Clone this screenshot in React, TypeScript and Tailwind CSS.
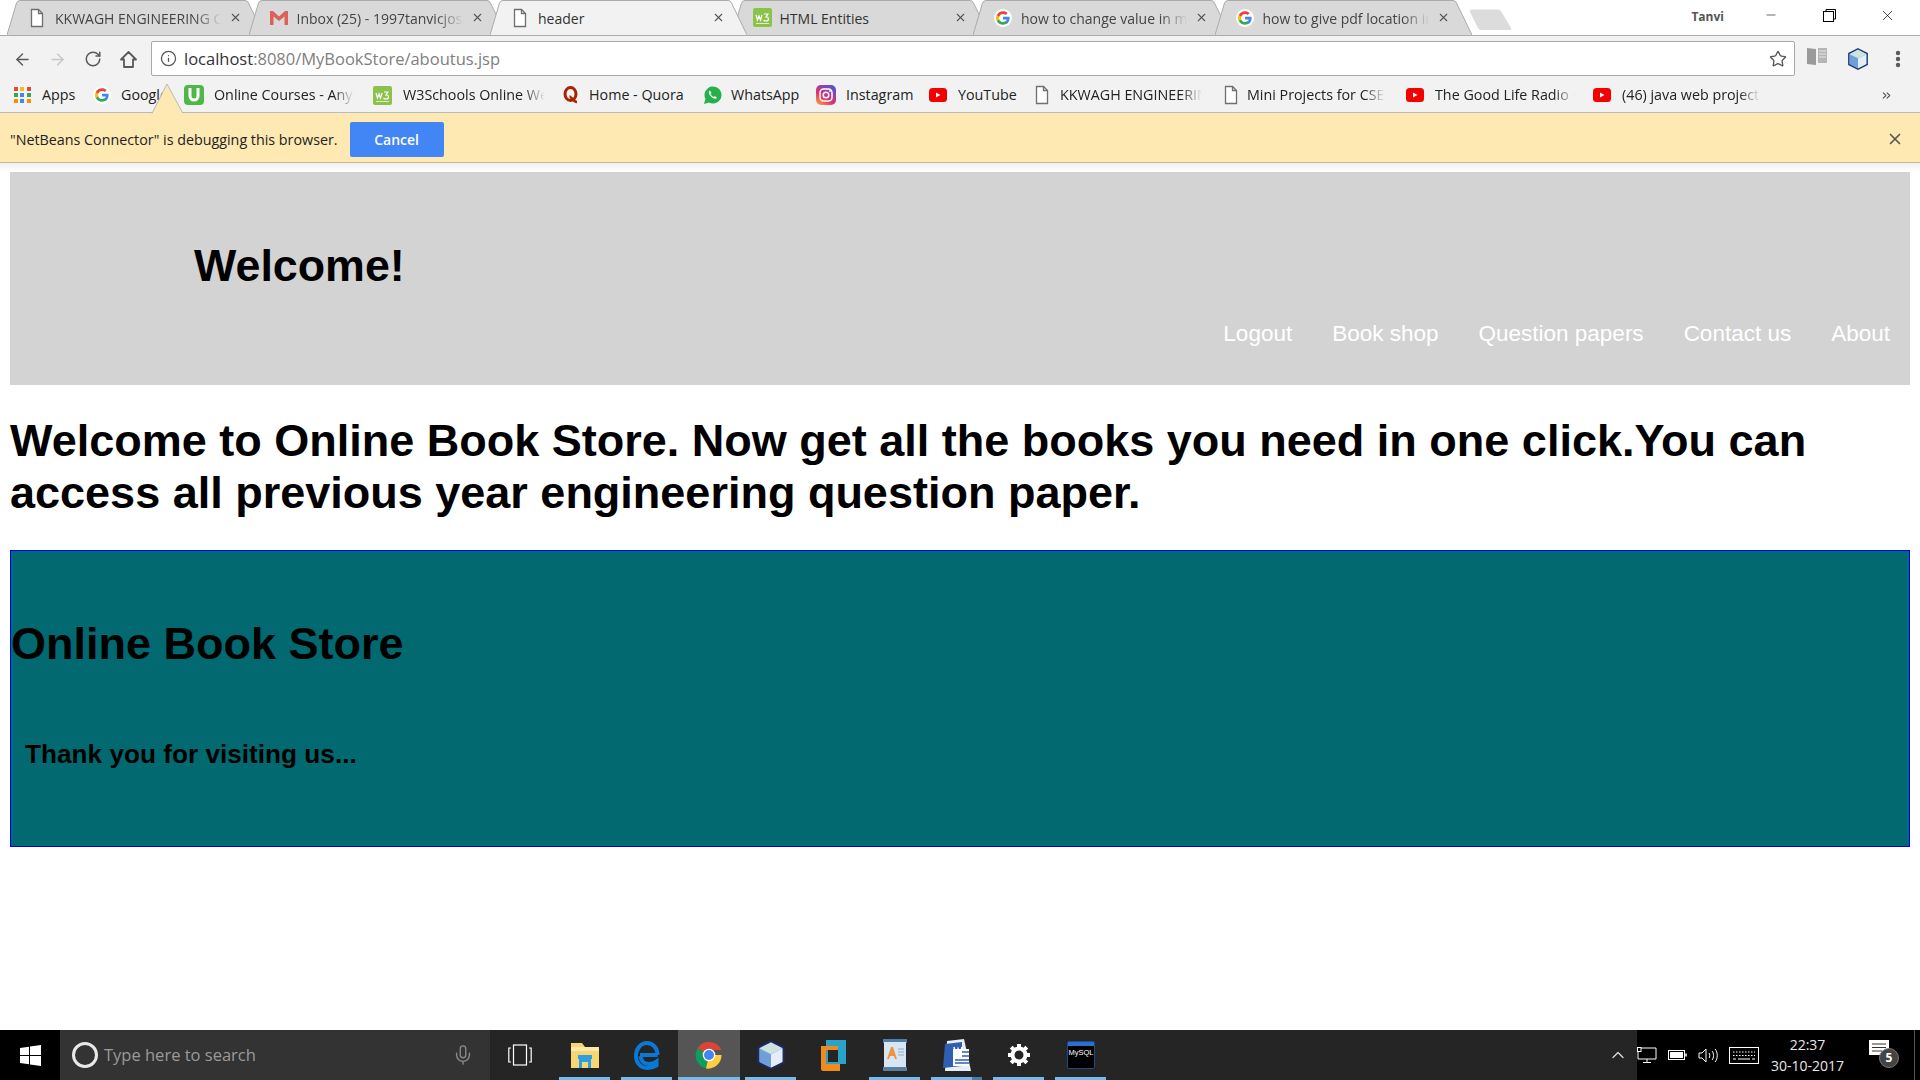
import React from "react";
import { ArrowLeft, ArrowRight, RotateCw, Info, Star, X, Minus, Mic, ChevronUp, ChevronsRight } from "lucide-react";

const ui = "font-['Open_Sans','Noto_Sans',sans-serif]";

function G({ s = 18 }: { s?: number }) {
  return (
    <svg width={s} height={s} viewBox="0 0 48 48" className="shrink-0">
      <circle cx="24" cy="24" r="24" fill="#fff" />
      <path fill="#4285F4" d="M41.6 24.4c0-1.3-.1-2.500-.3-3.700H24v7h9.900c-.4 2.300-1.700 4.200-3.700 5.500v4.600h6c3.500-3.200 5.400-7.900 5.400-13.400z" />
      <path fill="#34A853" d="M24 42c5 0 9.200-1.700 12.200-4.500l-6-4.600c-1.600 1.100-3.700 1.800-6.200 1.800-4.800 0-8.900-3.200-10.300-7.600H7.500v4.800C10.500 37.900 16.800 42 24 42z" />
      <path fill="#FBBC05" d="M13.700 28.100c-.4-1.100-.6-2.300-.6-3.600s.2-2.500.6-3.600v-4.800H7.500C6.200 18.600 5.500 21.200 5.500 24.500s.7 5.900 2 8.400z" />
      <path fill="#EA4335" d="M24 13.300c2.700 0 5.100.9 7 2.800l5.300-5.300C33.200 7.800 29 6 24 6 16.800 6 10.500 10.100 7.500 16.100l6.200 4.800c1.400-4.400 5.500-7.600 10.300-7.600z" />
    </svg>
  );
}

function Doc() {
  return (
    <svg width="18" height="20" viewBox="0 0 18 20" className="shrink-0" fill="none" stroke="#6f6f6f" strokeWidth="1.300">
      <path d="M3.500 1.500h7l4 4v13h-11z" fill="#fff" />
      <path d="M10.500 1.500v4h4" />
    </svg>
  );
}

function Gmail() {
  return (
    <svg width="18" height="16" viewBox="0 0 18 16" className="shrink-0">
      <path d="M0 1h3l6 5.500L15 1h3v14h-3.500V6.500L9 11 3.500 6.500V15H0z" fill="#d9635a" />
    </svg>
  );
}

function W3({ s = 19 }: { s?: number }) {
  return (
    <svg width={s} height={s} viewBox="0 0 19 19" className="shrink-0">
      <rect width="19" height="19" rx="2" fill="#8bc34a" />
      <path d="M3 7l1.500 5 1.500-4 1.500 4L9 7" stroke="#fff" strokeWidth="1.200" fill="none" />
      <path d="M11 6h4l-2 3c2 0 2.500 1 2.500 2s-1 2-2.500 2-2-.5-2.500-1" stroke="#fff" strokeWidth="1.200" fill="none" />
      <rect x="3" y="15" width="13" height="1" fill="#fff" opacity="0.7" />
    </svg>
  );
}

function Yt() {
  return (
    <svg width="18" height="14" viewBox="0 0 18 14" className="shrink-0">
      <rect width="18" height="14" rx="3.500" fill="#f40000" />
      <path d="M7 4.500l4.500 2.500L7 9.500z" fill="#fff" />
    </svg>
  );
}

function Grid() {
  const c = ["#e8453c", "#fbbc05", "#e8453c", "#34a853", "#4285f4", "#34a853", "#fb8c00", "#4285f4", "#fb8c00"];
  return (
    <div className="grid grid-cols-3 gap-[2px] w-[17px] shrink-0">
      {c.map((x, i) => (
        <svg key={i} width="4" height="4" className="block"><rect width="4" height="4" fill={x} /></svg>
      ))}
    </div>
  );
}

function U() {
  return (
    <svg width="20" height="20" viewBox="0 0 20 20" className="shrink-0">
      <rect width="20" height="20" rx="4" fill="#4db848" />
      <path d="M6 3v8a4 4 0 0 0 8 0V3" stroke="#fff" strokeWidth="3" fill="none" />
    </svg>
  );
}

function Quora() {
  return (
    <svg width="18" height="20" viewBox="0 0 18 20" className="shrink-0" fill="none" stroke="#a82400">
      <ellipse cx="8.500" cy="9" rx="5.500" ry="6.500" strokeWidth="3" />
      <path d="M7.500 11.500c2 0 3.500 5.500 7.500 5.500" strokeWidth="2.500" />
    </svg>
  );
}

function Wa() {
  return (
    <svg width="19" height="20" viewBox="0 0 19 20" className="shrink-0">
      <path d="M1 19l1.500-5A8.500 8.500 0 1 1 6 17.500z" fill="#25b04a" />
      <path d="M6.500 5.500c-1.500 1.500-.5 4 1.500 6s4.500 3 6 1.500l-2-2-1.500 1c-1-.5-2.500-2-3-3l1-1.500z" fill="#fff" />
    </svg>
  );
}

function Insta() {
  return (
    <svg width="20" height="20" viewBox="0 0 20 20" className="shrink-0">
      <defs>
        <linearGradient id="ig" x1="0" y1="1" x2="0.700" y2="0">
          <stop offset="0" stopColor="#fbb03b" />
          <stop offset="0.450" stopColor="#e1306c" />
          <stop offset="1" stopColor="#5b4fd0" />
        </linearGradient>
      </defs>
      <rect width="20" height="20" rx="5" fill="url(#ig)" />
      <rect x="4" y="4" width="12" height="12" rx="3.500" fill="none" stroke="#fff" strokeWidth="1.500" />
      <circle cx="10" cy="10" r="2.800" fill="none" stroke="#fff" strokeWidth="1.500" />
      <circle cx="14" cy="6" r="0.900" fill="#fff" />
    </svg>
  );
}

function Cube({ s = 22, dark = "#1f3a7a" }: { s?: number; dark?: string }) {
  return (
    <svg width={s} height={s} viewBox="0 0 24 24" className="shrink-0">
      <path d="M12 1l10 5v12l-10 5-10-5V6z" fill="#a9c6e8" stroke={dark} strokeWidth="1.600" />
      <path d="M12 2l9 4.500-9 4.500-9-4.500z" fill="#cfe3dd" />
      <path d="M3 7l9 4.500v10.500L3 17.500z" fill="#6f9fd8" />
      <path d="M21 7l-9 4.500v10.500l9-4.500z" fill="#e3eef8" />
    </svg>
  );
}

function Tab({ title, icon, active, fade = true }: { title: string; icon: React.ReactNode; active?: boolean; fade?: boolean }) {
  return (
    <div className={active ? "relative z-10 w-[257px] h-[35px] shrink-0 -mr-[15.500px]" : "relative w-[257px] h-[35px] shrink-0 -mr-[15.500px]"}>
      <svg width="257" height="35" viewBox="0 0 257 35" className="absolute inset-0">
        <path d="M0 35 L9.500 3 Q10.500 0.500 13 0.500 L238 0.500 Q240.500 0.500 241.500 3 L257 35" fill={active ? "#f2f2f2" : "#d9d9d9"} stroke="#ababab" strokeWidth="1" />
      </svg>
      <div className="relative flex items-center h-full pl-[21px]">
        <div className="w-[27px] flex items-center shrink-0">{icon}</div>
        <div className={fade ? "w-[170px] pt-[1px] whitespace-nowrap overflow-hidden text-[14px] text-[#444] [mask-image:linear-gradient(to_right,black_82%,transparent_98%)]" : "w-[170px] pt-[1px] whitespace-nowrap overflow-hidden text-[14px] text-[#333]"}>{title}</div>
        <X size={13} strokeWidth={2} className="ml-[4px] text-[#555]" />
      </div>
    </div>
  );
}

function Bm({ icon, label, w, col, tw, fade }: { icon: React.ReactNode; label: string; w: string; col: string; tw: string; fade?: boolean }) {
  return (
    <div className={`flex items-center shrink-0 ${w}`}>
      <div className={`${col} flex items-center shrink-0`}>{icon}</div>
      <div className={`${tw} whitespace-nowrap overflow-hidden text-[14.300px] text-[#222] ${fade ? "[mask-image:linear-gradient(to_right,black_85%,transparent)]" : ""}`}>{label}</div>
    </div>
  );
}

function Slot({ children, on, under = true, step }: { children: React.ReactNode; on?: boolean; under?: boolean; step?: boolean }) {
  return (
    <div className={on ? "relative w-[62px] h-full flex items-center justify-center bg-[#555]" : "relative w-[62px] h-full flex items-center justify-center"}>
      {children}
      {under && <div className={on ? "absolute bottom-0 left-0 right-0 h-[3px] bg-[#76b9ed]" : "absolute bottom-0 left-[5px] right-[6px] h-[3px] bg-[#76b9ed]"} />}
      {step && <div className="absolute bottom-0 right-[6px] w-[10px] h-[3px] bg-[#4a7ea8]" />}
    </div>
  );
}

export default function App() {
  return (
    <div className="w-[1920px] h-[1080px] flex flex-col overflow-hidden bg-white relative">
      <div className={ui}>
        {/* tab strip */}
        <div className="h-[36px] flex pl-[7px] border-b border-[#ababab] bg-white relative">
          <div className="flex h-[35px]">
            <Tab title="KKWAGH ENGINEERING COLLEGE" icon={<Doc />} />
            <Tab title="Inbox (25) - 1997tanvicjoshi" icon={<Gmail />} />
            <Tab title="header" icon={<Doc />} active fade={false} />
            <Tab title="HTML Entities" icon={<W3 />} fade={false} />
            <Tab title="how to change value in mysql" icon={<G />} />
            <Tab title="how to give pdf location in html" icon={<G />} />
          </div>
          <svg width="44" height="22" viewBox="0 0 44 22" className="ml-[13px] mt-[9px] shrink-0">
            <path d="M2 0.500 L29 0.500 Q31 0.500 32 2 L42 19 Q42.500 21 40 21 L12 21 Q10 21 9 19 L1 3 Q0.500 0.500 2 0.500z" fill="#dcdcdc" />
          </svg>
          <div className="ml-auto flex items-start h-full pr-[4px]">
            <div className="mt-[8px] mr-[18px] text-[12px] font-bold text-[#555]">Tanvi</div>
            <div className="w-[58px] h-[30px] flex items-center justify-center"><Minus size={14} strokeWidth={1} className="text-black" /></div>
            <div className="w-[58px] h-[30px] flex items-center justify-center">
              <svg width="13" height="13" viewBox="0 0 13 13" fill="none" stroke="#000"><rect x="0.500" y="2.500" width="10" height="10" /><path d="M3 2.500V0.500h9.500V10h-2" /></svg>
            </div>
            <div className="w-[58px] h-[30px] flex items-center justify-center"><X size={17} strokeWidth={1} className="text-black" /></div>
          </div>
        </div>

        {/* toolbar */}
        <div className="h-[45px] bg-[#f2f2f2] flex items-center">
          <div className="w-[151px] flex items-center shrink-0 pt-[1px]">
            <ArrowLeft size={19} strokeWidth={1.800} className="ml-[13px] text-[#5a5a5a]" />
            <ArrowRight size={19} strokeWidth={1.800} className="ml-[16px] text-[#c8c8c8]" />
            <RotateCw size={18} strokeWidth={2} className="ml-[17px] text-[#5a5a5a]" />
            <svg width="19" height="19" viewBox="0 0 19 19" fill="none" stroke="#5a5a5a" strokeWidth="1.800" className="ml-[17px] shrink-0">
              <path d="M2 9.500L9.500 2 17 9.500h-3V17H5V9.500z" strokeLinejoin="round" />
            </svg>
          </div>
          <div className="w-[1644px] h-[35px] shrink-0 bg-white border border-[#a9a9a9] rounded-[2px] flex items-center pl-[8px] pr-[7px]">
            <Info size={17} strokeWidth={1.800} className="text-[#555]" />
            <div className="ml-[7px] pt-[1px] text-[16.500px] text-[#333] whitespace-nowrap">localhost<span className="text-[#808080]">:8080/MyBookStore/aboutus.jsp</span></div>
            <Star size={18} strokeWidth={1.800} className="ml-auto text-[#555]" />
          </div>
          <div className="flex items-center flex-1 pl-[12px]">
            <svg width="20" height="19" viewBox="0 0 20 19" className="shrink-0 -mt-[4px]">
              <path d="M0 1l9 1v16l-9-1z" fill="#9a9a9a" /><path d="M11 1h9v15h-9z" fill="#b5b5b5" />
              <path d="M12 4h7M12 7h7M12 10h7" stroke="#e6e6e6" />
            </svg>
            <div className="ml-[20px]"><Cube s={22} /></div>
            <svg width="6" height="18" viewBox="0 0 6 18" className="ml-[26px] shrink-0" fill="#5a5a5a">
              <circle cx="3" cy="3" r="2.200" /><circle cx="3" cy="9" r="2.200" /><circle cx="3" cy="15" r="2.200" />
            </svg>
          </div>
        </div>

        {/* bookmarks */}
        <div className="h-[32px] bg-[#f2f2f2] flex items-center pl-[14px] pb-[3px] border-b border-[#b9b9b9]">
          <Bm icon={<Grid />} label="Apps" w="w-[79px]" col="w-[28px]" tw="w-[40px]" />
          <Bm icon={<G />} label="Google" w="w-[91px]" col="w-[28px]" tw="w-[46px]" />
          <Bm icon={<U />} label="Online Courses - Anytime" w="w-[189px]" col="w-[30px]" tw="w-[140px]" fade />
          <Bm icon={<W3 />} label="W3Schools Online Web Tutorials" w="w-[189px]" col="w-[30px]" tw="w-[142px]" fade />
          <Bm icon={<Quora />} label="Home - Quora" w="w-[141px]" col="w-[27px]" tw="w-[100px]" />
          <Bm icon={<Wa />} label="WhatsApp" w="w-[113px]" col="w-[28px]" tw="w-[80px]" />
          <Bm icon={<Insta />} label="Instagram" w="w-[113px]" col="w-[30px]" tw="w-[70px]" />
          <Bm icon={<Yt />} label="YouTube" w="w-[104px]" col="w-[29px]" tw="w-[60px]" />
          <Bm icon={<Doc />} label="KKWAGH ENGINEERING" w="w-[189px]" col="w-[27px]" tw="w-[142px]" fade />
          <Bm icon={<Doc />} label="Mini Projects for CSE Students" w="w-[184px]" col="w-[25px]" tw="w-[138px]" fade />
          <Bm icon={<Yt />} label="The Good Life Radio • Sensual" w="w-[187px]" col="w-[29px]" tw="w-[140px]" fade />
          <Bm icon={<Yt />} label="(46) java web project tutorial" w="w-[287px]" col="w-[29px]" tw="w-[138px]" fade />
          <ChevronsRight size={13} strokeWidth={2} className="text-[#555]" />
        </div>

        {/* infobar */}
        <div className="relative h-[50px] bg-[#fee9b2] border-b border-[#c9b98a] flex items-center pl-[10px] pt-[3px]">
          <svg width="34" height="31" viewBox="0 0 34 31" className="absolute left-[151px] -top-[30px]">
            <path d="M1 30.500L16 1l16 29.500" fill="#fee9b2" stroke="#b9b9b9" />
            <path d="M2 31h30" stroke="#fee9b2" strokeWidth="2" />
          </svg>
          <div className="pt-[1px] text-[14.300px] text-[#222]">"NetBeans Connector" is debugging this browser.</div>
          <button className="ml-[12px] w-[94px] h-[35px] bg-[#4285f4] rounded-[2px] text-white text-[14px] font-semibold">Cancel</button>
          <X size={18} strokeWidth={2.200} className="ml-auto mr-[16px] text-[#555]" />
        </div>
        <div className="h-[9px] bg-gradient-to-b from-[#f0f0f0] to-white" />
      </div>

      {/* page */}
      <div className="flex-1 px-[10px] font-['Liberation_Sans',Arial,sans-serif]">
        <div className="h-[213px] bg-[#d3d3d3] flex flex-col">
          <div className="pl-[184px] pt-[67px] text-[44.800px] leading-[52px] font-bold text-black">Welcome!</div>
          <div className="flex justify-end gap-[40px] pr-[20px] mt-[30px] text-[22.500px] leading-[26px] text-white">
            <span>Logout</span>
            <span>Book shop</span>
            <span>Question papers</span>
            <span>Contact us</span>
            <span>About</span>
          </div>
        </div>
        <h1 className="mt-[30px] text-[45px] leading-[52px] font-bold text-black">
          Welcome to Online Book Store. Now get all the books you need in one click.You can access all previous year engineering question paper.
        </h1>
        <div className="mt-[31px] h-[297px] bg-[#01696f] border border-[#0000ff] text-black font-bold">
          <div className="pt-[67px] text-[45px] leading-[52px]">Online Book Store</div>
          <div className="mt-[69px] pl-[14px] text-[26.200px] leading-[30px]">Thank you for visiting us...</div>
        </div>
      </div>

      {/* taskbar */}
      <div className={`${ui} h-[50px] shrink-0 flex bg-[#252525] text-white`}>
        <div className="w-[60px] bg-black flex items-center justify-center">
          <svg width="21" height="21" viewBox="0 0 21 21" fill="#fff"><path d="M0 3l9-1.300V10H0zM10 1.500L21 0v10H10zM0 11h9v8.300L0 18zM10 11h11v10l-11-1.500z" /></svg>
        </div>
        <div className="w-[430px] bg-[#333] flex items-center pl-[11px] pr-[16px]">
          <svg width="28" height="28" viewBox="0 0 28 28" fill="none"><circle cx="14" cy="14" r="11.500" stroke="#e8e8e8" strokeWidth="3" /></svg>
          <div className="ml-[5px] text-[16.500px] text-[#9a9a9a]">Type here to search</div>
          <Mic size={22} strokeWidth={1.500} className="ml-auto text-[#8a8a8a]" />
        </div>
        <div className="w-[64px] flex items-center pl-[18px]">
          <svg width="24" height="22" viewBox="0 0 24 22" fill="none" stroke="#fff" strokeWidth="1.200">
            <rect x="5.500" y="1" width="13" height="20" /><path d="M3 4H0.800v14H3M21 4h2.200v14H21" />
          </svg>
        </div>
        <Slot>
          <svg width="30" height="28" viewBox="0 0 30 28">
            <path d="M1 2h11l3 4h14v21H1z" fill="#f7d774" /><path d="M1 6h28v4H1z" fill="#fbe9a8" />
            <path d="M9 27V17h12v10h-3v-6h-6v6z" fill="#2f9fe0" /><path d="M8 14h14v4H8z" fill="#2f9fe0" />
          </svg>
        </Slot>
        <Slot>
          <svg width="28" height="30" viewBox="0 0 28 30" fill="none">
            <path d="M24.500 15H7M24.500 15C24.500 8 20 3 14 3 7.500 3 3 9 3 16c0 7.500 5.500 12 11.500 12 3.500 0 6.500-1 9-2.500v-4c-2.500 1.800-5 2.500-8 2.500-4 0-7.500-2.500-8-8" stroke="#0b78d7" strokeWidth="4" />
          </svg>
        </Slot>
        <Slot on>
          <svg width="28" height="28" viewBox="0 0 28 28">
            <path d="M14 14L2.500 7.500A13.500 13.500 0 0 1 26.500 9H14z" fill="#db4437" />
            <path d="M14 14l-11.500-6.500A13.500 13.500 0 0 0 11 27.500z" fill="#0f9d58" />
            <path d="M14 14h12.500A13.500 13.500 0 0 1 11 27.500z" fill="#ffcd40" />
            <circle cx="14" cy="14" r="6.300" fill="#fff" /><circle cx="14" cy="14" r="5" fill="#4285f4" />
          </svg>
        </Slot>
        <Slot><Cube s={30} dark="#1d2a6b" /></Slot>
        <Slot under={false}>
          <svg width="26" height="34" viewBox="0 0 26 34">
            <path d="M1 8h19v25H3a2 2 0 0 1-2-2z" fill="#f08a1d" />
            <path d="M6 2h20v24H6z" fill="#2aa3c8" /><path d="M8 12h10v12H8z" fill="#252525" />
            <path d="M6 8h12v4H6z" fill="#f08a1d" />
          </svg>
        </Slot>
        <Slot>
          <svg width="26" height="34" viewBox="0 0 26 34">
            <rect x="1" y="1" width="24" height="4" fill="#4e7ea8" /><rect x="2" y="4" width="22" height="26" fill="#d6e6f4" />
            <rect x="1" y="29" width="24" height="4" fill="#5a7f9c" />
            <path d="M5 21l4-12h2l4 12h-2l-1-3H8l-1 3z" fill="#f2923c" />
            <path d="M16 11h6M16 14h6M16 17h6" stroke="#8fb0cc" />
          </svg>
        </Slot>
        <Slot step>
          <svg width="30" height="34" viewBox="0 0 30 34">
            <path d="M5 3l17-2 7 32-26 0z" fill="#e6eef8" />
            <path d="M3 6l17-2v24L1 30z" fill="#2f5fb0" /><path d="M11 11h16v17H11z" fill="#fff" />
            <path d="M12 9l2 9 2-7 2 7 2-9" stroke="#fff" strokeWidth="1.500" fill="none" />
            <path d="M20 14h7M20 18h7M13 22h14M13 25h14" stroke="#2f5fb0" strokeWidth="1.500" />
          </svg>
        </Slot>
        <Slot>
          <svg width="24" height="24" viewBox="0 0 24 24" fill="none" stroke="#fff">
            <circle cx="12" cy="12" r="6.500" strokeWidth="4" />
            <path d="M12 1v5M12 18v5M1 12h5M18 12h5M4.200 4.200l3.500 3.500M16.300 16.300l3.500 3.500M19.800 4.200l-3.500 3.500M7.700 16.300l-3.500 3.500" strokeWidth="4" />
          </svg>
        </Slot>
        <Slot>
          <div className="w-[28px] h-[28px] bg-black border border-[#1e4a8a] rounded-[2px] flex flex-col">
            <div className="h-[4px] bg-[#2a6fd0]" />
            <div className="text-[7.500px] leading-[14px] text-white text-center whitespace-nowrap font-['Liberation_Sans',sans-serif]">MySQL</div>
          </div>
        </Slot>
        <div className="flex-1" />
        <div className="w-[283px] bg-black relative flex items-center">
          <ChevronUp size={20} strokeWidth={1.500} className="absolute -left-[29px] text-[#ddd]" />
          <svg width="20" height="16" viewBox="0 0 20 16" fill="none" stroke="#fff" className="ml-0 shrink-0"><path d="M4 1h15v11H1V4M10 12v3M6 15.500h8" /><rect x="0.500" y="0.500" width="3.500" height="4" /></svg>
          <svg width="19" height="10" viewBox="0 0 19 10" className="ml-[11px] shrink-0" fill="none" stroke="#fff"><rect x="0.500" y="0.500" width="16" height="9" /><rect x="2" y="2" width="13" height="6" fill="#fff" stroke="none" /><path d="M18 3.500v3" strokeWidth="1.500" /></svg>
          <svg width="21" height="17" viewBox="0 0 21 17" className="ml-[11px] shrink-0" fill="none" stroke="#fff"><path d="M1 6h3l4-4v13l-4-4H1z" /><path d="M11 6c1 1 1 4 0 5M14 4c2 2 2 7 0 9M17 2c3 3 3 10 0 13" /></svg>
          <svg width="30" height="17" viewBox="0 0 30 17" className="ml-[10px] shrink-0" fill="none" stroke="#fff"><rect x="0.500" y="0.500" width="29" height="16" /><path d="M4 5h22M4 8.500h22" strokeDasharray="1.500 1.500" /><path d="M4 12h3M9 12h12M23 12h3" /></svg>
          <div className="w-[81px] ml-[8px] text-center text-[14px] leading-[21px] text-[#e8e8e8] shrink-0">
            <div>22:37</div>
            <div>30-10-2017</div>
          </div>
          <div className="relative ml-[21px] w-[30px] h-[30px] shrink-0">
            <svg width="20" height="19" viewBox="0 0 20 19"><path d="M0 0h20v15H0z" fill="#fff" /><path d="M3 4h14M3 7.500h14M3 11h10" stroke="#333" /></svg>
            <div className="absolute left-[10px] top-[8px] w-[20px] h-[20px] rounded-full bg-[#444] border border-[#777] flex items-center justify-center text-[12px] font-bold text-white">5</div>
          </div>
          <div className="absolute right-[5px] top-0 bottom-0 w-px bg-[#555]" />
        </div>
      </div>
    </div>
  );
}
